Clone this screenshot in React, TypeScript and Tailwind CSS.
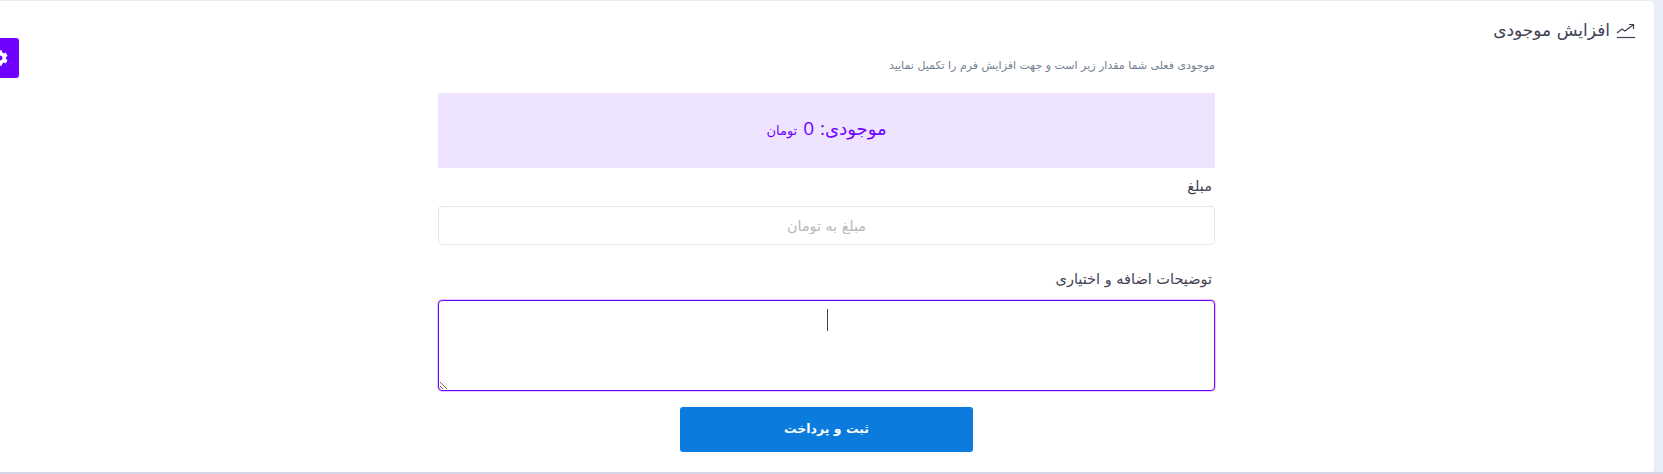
import React from "react";
import { FaCog } from "react-icons/fa";

const App: React.FC = () => {
  return (
    <div
      dir="rtl"
      className="relative h-[474px] w-full overflow-hidden bg-[#e9edf7] font-['DejaVu_Sans','Noto_Sans',sans-serif]"
    >
      <div className="mr-[9px] mt-px h-[471px] rounded-r-[4px] bg-white pl-[17px] pr-[18px]">
        {/* title */}
        <div className="flex h-[55px] items-center gap-[6px] pt-[3px] text-[#3f4254]">
          <svg width="20" height="18" viewBox="0 0 20 18" fill="none" stroke="currentColor" strokeWidth="1.2" className="mb-[1px]">
            <path d="M1 16.5h18" />
            <path d="M1 12l5-4 3 2 8-6" />
            <path d="M13 3.5h4.5V8" />
          </svg>
          <h1 className="text-[17px] font-normal leading-none">افزایش موجودی</h1>
        </div>

        <div className="mx-auto w-[777px]">
          <p className="h-[37px] text-[11px] leading-[20px] text-[#74808f]">
            موجودی فعلی شما مقدار زیر است و جهت افزایش فرم را تکمیل نمایید
          </p>

          <div className="flex h-[75px] items-center justify-center bg-[#efe4ff] pb-[5px] text-[#7000ff]">
            <div className="flex items-baseline">
              <span className="text-[18px]">موجودی</span>
              <span className="font-['Open_Sans',sans-serif] text-[19px]">:</span>
              <span className="mr-[6px] font-['Open_Sans',sans-serif] text-[19px]">0</span>
              <span className="mr-[6px] text-[13px]">تومان</span>
            </div>
          </div>

          <label className="mt-[9px] block pr-[3px] text-[14.5px] leading-[18px] text-[#3f4254]">مبلغ</label>
          <input
            type="text"
            placeholder="مبلغ به تومان"
            className="mt-[11px] block h-[39px] w-full rounded-[4px] border border-[#e2e7ea] bg-white px-3 text-center text-[14.3px] outline-none placeholder:text-[#b8b8b8]"
          />

          <label className="mt-[25px] block pr-[3px] text-[14.5px] leading-[18px] text-[#3f4254]">
            توضیحات اضافه و اختیاری
          </label>
          <div className="relative mt-[12px]">
            <textarea className="block h-[91px] w-full rounded-[4px] border border-[#7000ff] bg-white shadow-[0_0_0_1px_rgba(112,0,255,0.2)] outline-none" />
            {/* caret */}
            <span className="absolute left-[389px] top-[9px] h-[22px] w-px bg-[#3f4254]" />
          </div>

          <button
            type="button"
            className="mx-auto mt-[16px] block h-[45px] w-[293px] rounded-[3px] bg-[#0b7bdd] text-[12.5px] font-bold text-white"
          >
            ثبت و پرداخت
          </button>
        </div>
      </div>
      <div className="absolute bottom-0 left-0 h-[2px] w-full bg-[#d4d8e6]" />

      {/* settings tab */}
      <div className="absolute left-0 top-[38px] flex h-[40px] w-[19px] items-center overflow-hidden rounded-r-[3px] bg-[#7000ff] text-white">
        <FaCog size={16} className="absolute left-[-8px] top-[12px]" />
      </div>
    </div>
  );
};

export default App;
